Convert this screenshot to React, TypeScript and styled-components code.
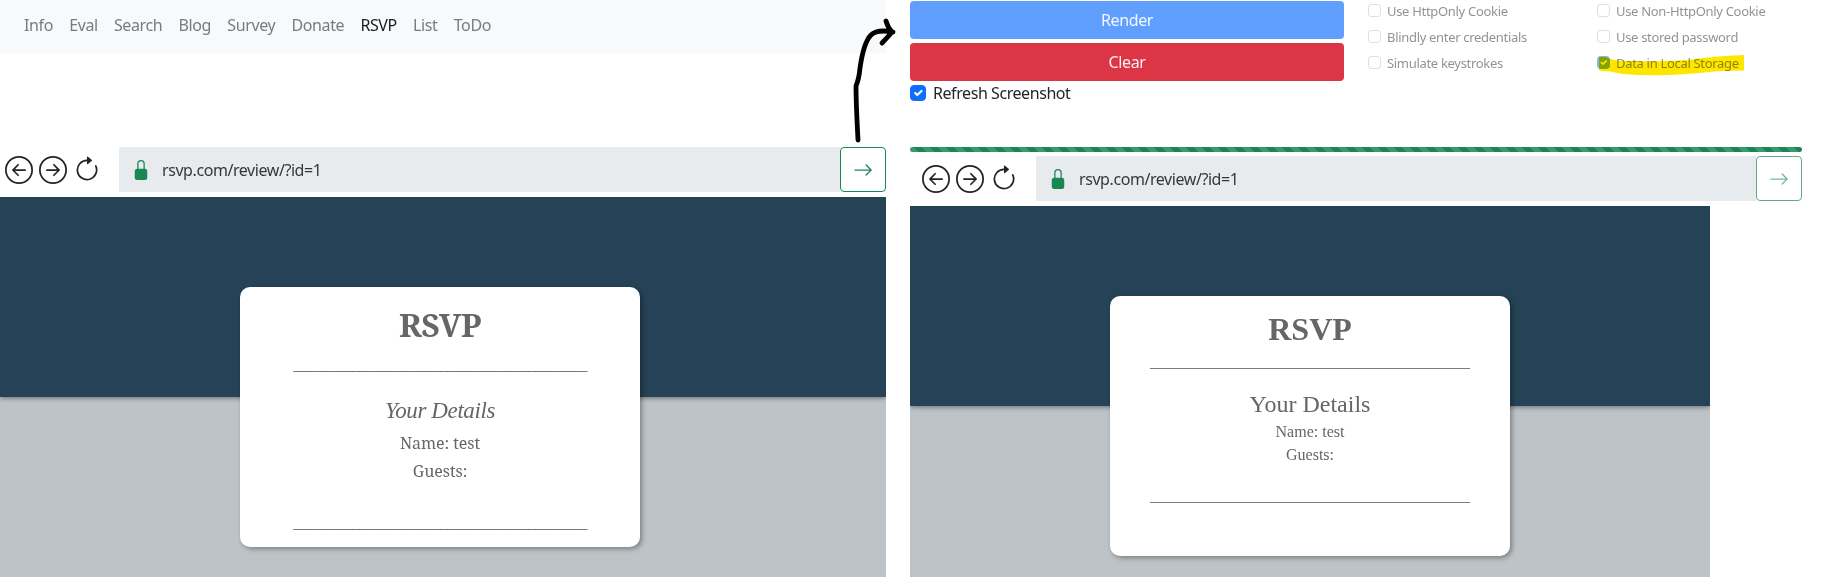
import React from 'react';
import styled, { createGlobalStyle } from 'styled-components';
import { BsArrowLeftCircle, BsArrowRightCircle, BsArrowClockwise, BsLockFill, BsArrowRight } from 'react-icons/bs';

const Global = createGlobalStyle`
  * { box-sizing: border-box; }
  body { margin: 0; background: #fff; color: #212529; font: 16px/24px "Noto Sans", sans-serif; overflow: hidden; }
`;

const Page = styled.div`
  position: relative;
  display: flex;
  gap: 24px;
  width: 1836px;
  height: 577px;
  overflow: hidden;
`;
const Column = styled.section<{ $width: number }>`
  display: flex;
  flex-direction: column;
  flex: none;
  width: ${p => p.$width}px;
`;
const Nav = styled.nav`
  display: flex;
  gap: 16.2px;
  height: 53px;
  padding: 13px 24px 0;
  margin-bottom: 94px;
  background: #f8f9fb;
`;
const NavLink = styled.a<{ $active?: boolean }>`
  color: ${p => (p.$active ? '#1a1b1c' : '#7a7b7c')};
  letter-spacing: -0.38px;
  white-space: nowrap;
`;
const AddressBar = styled.div<{ $indent: number }>`
  display: flex;
  flex: none;
  height: 45px;
  margin-bottom: 5px;
  padding-left: ${p => p.$indent}px;
`;
const Controls = styled.div`
  display: flex;
  align-items: center;
  gap: 6px;
  width: 114px;
`;
const Field = styled.div`
  display: flex;
  align-items: center;
  flex: 1;
  padding-left: 12px;
  gap: 11px;
  background: #e7ebee;
  svg { color: #198754; }
`;
const Url = styled.span`
  padding-top: 1px;
  color: #33383c;
  letter-spacing: -0.43px;
`;
const Go = styled.button<{ $faded?: boolean }>`
  display: flex;
  align-items: center;
  justify-content: center;
  width: 46px;
  padding: 0;
  border: 1px solid ${p => (p.$faded ? '#5fac88' : '#198754')};
  border-radius: 4px;
  background: #fff;
  color: ${p => (p.$faded ? '#75b798' : '#198754')};
`;
const Viewport = styled.div<{ $width: number }>`
  display: flex;
  flex-direction: column;
  align-items: flex-start;
  flex: 1;
  width: ${p => p.$width}px;
  overflow: hidden;
  background: #bdc3c7;
`;
const Banner = styled.div`
  width: 100%;
  height: 200px;
  flex: none;
  background: #264256;
  box-shadow: 0 1px 5px rgba(0, 0, 0, 0.45);
`;
const Card = styled.article<{ $left: number; $serif: string }>`
  position: relative;
  display: flex;
  flex-direction: column;
  align-items: center;
  width: 400px;
  height: 260px;
  flex: none;
  margin: -110px 0 0 ${p => p.$left}px;
  border-radius: 10px;
  background: #fff;
  color: #666;
  box-shadow: 2px 2px 5px rgba(0, 0, 0, 0.35);
  font-family: ${p => p.$serif};
`;
const Line = styled.div<{ $top: number; $size?: number; $bold?: boolean; $spacing?: number; $script?: boolean }>`
  height: 24px;
  margin-top: ${p => p.$top}px;
  line-height: 24px;
  font-size: ${p => p.$size ?? 16}px;
  font-weight: ${p => (p.$bold ? 700 : 400)};
  letter-spacing: ${p => p.$spacing ?? 0}px;
  white-space: nowrap;
  ${p => p.$script && 'font-family: "Z003", "URW Chancery L", "Apple Chancery", "Liberation Serif", serif; font-style: italic;'}
`;
const Rule = styled(Line)`
  font-family: "Liberation Serif", serif;
`;
const Panel = styled.div`
  display: flex;
  gap: 24px;
  height: 147px;
  flex: none;
`;
const Actions = styled.div`
  display: flex;
  flex-direction: column;
  gap: 4px;
  width: 434px;
  padding-top: 1px;
`;
const Action = styled.button<{ $color: string }>`
  height: 38px;
  padding: 0;
  border: 0;
  border-radius: 4px;
  background: ${p => p.$color};
  color: rgba(255, 255, 255, 0.92);
  font: 16px/24px "Noto Sans", sans-serif;
  letter-spacing: -0.35px;
`;
const Check = styled.label`
  display: flex;
  align-items: center;
  gap: 7px;
  height: 16px;
  letter-spacing: -0.43px;
  white-space: nowrap;
`;
const Options = styled.div`
  display: grid;
  grid-template-columns: 229px 200px;
  grid-auto-rows: 26px;
  padding-top: 4px;
`;
const Option = styled.label`
  display: flex;
  gap: 6px;
  height: 13px;
  align-items: center;
  opacity: 0.5;
  font-size: 13px;
  letter-spacing: -0.31px;
  white-space: nowrap;
`;
const Box = styled.span<{ $on?: boolean; $size: number }>`
  display: flex;
  flex: none;
  width: ${p => p.$size}px;
  height: ${p => p.$size}px;
  border: 1px solid ${p => (p.$on ? '#0d6efd' : '#bfbfbf')};
  border-radius: ${p => p.$size / 4}px;
  background: ${p => (p.$on ? '#0d6efd' : '#fff')};
  svg { width: 100%; height: 100%; }
`;
const Progress = styled.div`
  height: 5px;
  flex: none;
  margin-bottom: 4px;
  border-radius: 4px;
  background: #198754 repeating-linear-gradient(45deg, rgba(255,255,255,.15) 0 5.657px, transparent 5.657px 11.314px);
`;
const Ink = styled.svg`
  position: absolute;
  inset: 0;
  pointer-events: none;
  mix-blend-mode: multiply;
`;

const Tick = ({ on, size }: { on?: boolean; size: number }) => (
  <Box $on={on} $size={size}>
    {on && (
      <svg viewBox="0 0 20 20" fill="none" stroke="#fff" strokeWidth="3" strokeLinecap="round" strokeLinejoin="round">
        <path d="M6 10l3 3 6-6" />
      </svg>
    )}
  </Box>
);

const Browser = ({ indent, faded }: { indent: number; faded?: boolean }) => (
  <AddressBar $indent={indent}>
    <Controls>
      <BsArrowLeftCircle size={28} />
      <BsArrowRightCircle size={28} />
      <BsArrowClockwise size={28} />
    </Controls>
    <Field>
      <BsLockFill size={20} />
      <Url>rsvp.com/review/?id=1</Url>
    </Field>
    <Go $faded={faded}><BsArrowRight size={20} /></Go>
  </AddressBar>
);

const underscores = '_'.repeat(40);
const links = ['Info', 'Eval', 'Search', 'Blog', 'Survey', 'Donate', 'RSVP', 'List', 'ToDo'];
const options = ['Use HttpOnly Cookie', 'Use Non-HttpOnly Cookie', 'Blindly enter credentials', 'Use stored password', 'Simulate keystrokes', 'Data in Local Storage'];

export default function App() {
  return (
    <Page>
      <Global />
      <Column $width={886}>
        <Nav>{links.map(l => <NavLink key={l} $active={l === 'RSVP'}>{l}</NavLink>)}</Nav>
        <Browser indent={5} />
        <Viewport $width={886}>
          <Banner />
          <Card $left={240} $serif={'"Noto Serif", "Liberation Serif", serif'}>
            <Line $top={26} $size={32} $bold $spacing={-0.3}>RSVP</Line>
            <Rule $top={16} $spacing={-0.66}>{underscores}</Rule>
            <Line $top={22} $size={23} $spacing={-0.4} $script>Your Details</Line>
            <Line $top={8} $spacing={-0.05}>Name: test</Line>
            <Line $top={4} $spacing={-0.05}>Guests:</Line>
            <Rule $top={28} $spacing={-0.66}>{underscores}</Rule>
          </Card>
        </Viewport>
      </Column>
      <Column $width={892}>
        <Panel>
          <Actions>
            <Action $color="#619fff">Render</Action>
            <Action $color="#dc3545">Clear</Action>
            <Check><Tick on size={16} />Refresh Screenshot</Check>
          </Actions>
          <Options>
            {options.map((o, i) => <Option key={o}><Tick on={i === 5} size={13} />{o}</Option>)}
          </Options>
        </Panel>
        <Progress />
        <Browser indent={12} faded />
        <Viewport $width={800}>
          <Banner />
          <Card $left={200} $serif={'"Liberation Serif", serif'}>
            <Line $top={21} $size={32} $bold>RSVP</Line>
            <Rule $top={9}>{underscores}</Rule>
            <Line $top={18} $size={24}>Your Details</Line>
            <Line $top={4}>Name: test</Line>
            <Line $top={-1}>Guests:</Line>
            <Rule $top={17}>{underscores}</Rule>
          </Card>
        </Viewport>
      </Column>
      <Ink width="1836" height="577" viewBox="0 0 1836 577">
        <path d="M858 140C857 120 856 104 856 86Q859 79 860 68C862 54 865 41 871 35Q877 29 893 32M886 21Q888 28 892 32Q887 38 882 43" fill="none" stroke="#000" strokeWidth="4.8" strokeLinecap="round" strokeLinejoin="round" />
        <path d="M1599 57L1606 57Q1612 61 1628 61Q1660 62 1688 60Q1715 56 1744 55V70.5Q1715 70.5 1700 73Q1655 77 1623 74Q1612 71 1599 70.5Z" fill="#ffe600" />
      </Ink>
    </Page>
  );
}
